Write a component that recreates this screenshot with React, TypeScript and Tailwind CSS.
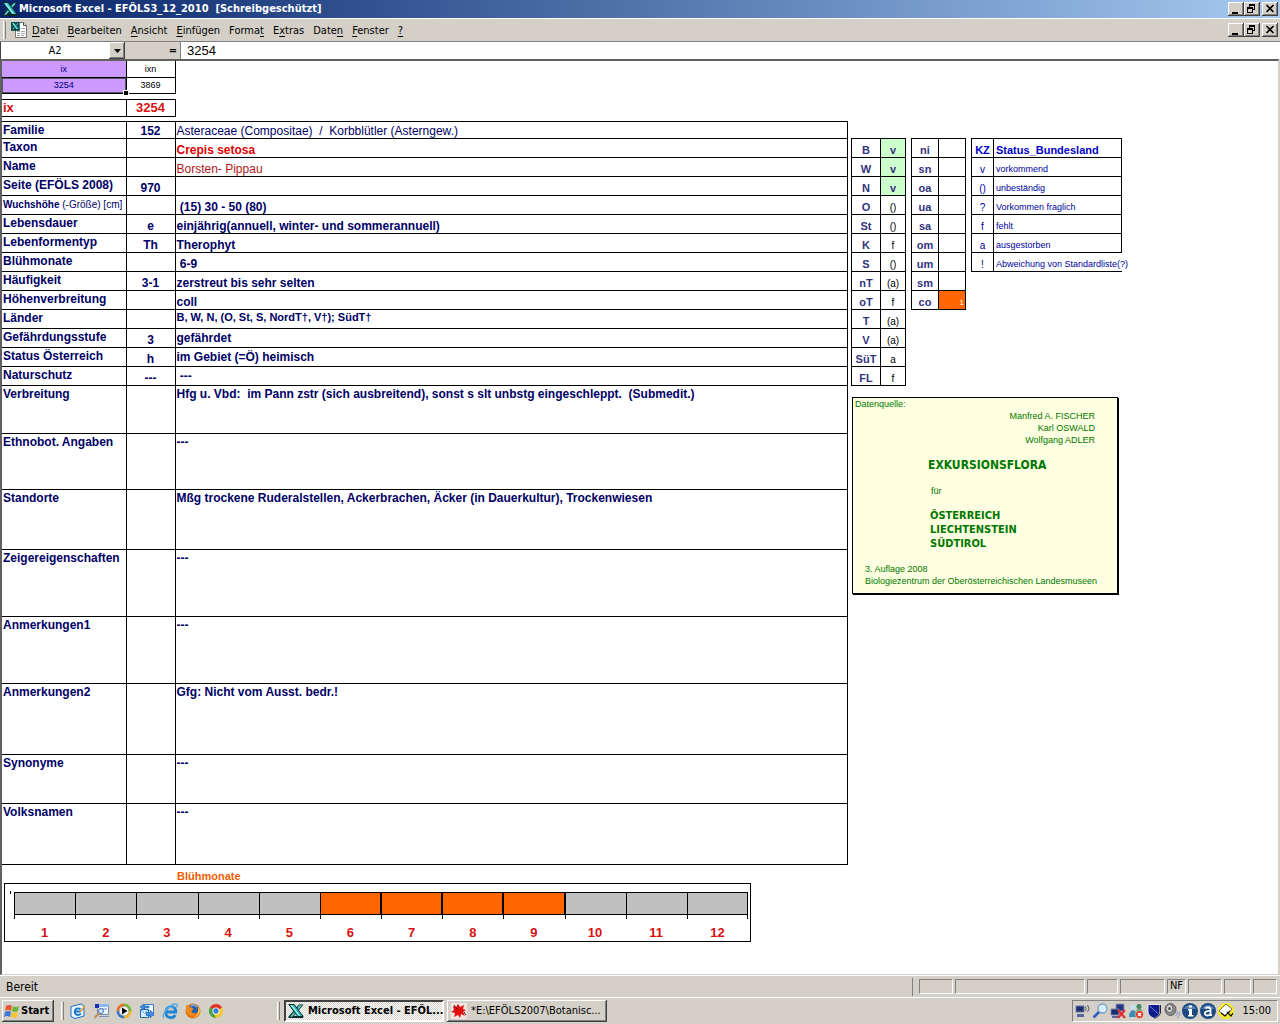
import React from "react";

const UI_FONT = "font-['DejaVu_Sans_Condensed','DejaVu_Sans',sans-serif]";
const RAISED =
  "bg-[#d4d0c8] shadow-[inset_-1px_-1px_#404040,inset_1px_1px_#ffffff,inset_-2px_-2px_#808080]";
const SUNKEN = "border border-t-[#808080] border-l-[#808080] border-b-white border-r-white";

type Row = {
  label: React.ReactNode;
  code?: string;
  value: string;
  height: string;
  valueClass?: string;
};

const rows: Row[] = [
  { label: "Familie", code: "152", value: "Asteraceae (Compositae)  /  Korbblütler (Asterngew.)", height: "h-[17px]", valueClass: "align-bottom font-normal" },
  { label: "Taxon", value: "Crepis setosa", height: "h-[19px]", valueClass: "align-bottom text-[#e00000]" },
  { label: "Name", value: "Borsten- Pippau", height: "h-[19px]", valueClass: "align-bottom font-normal text-[#b01818]" },
  { label: "Seite (EFÖLS 2008)", code: "970", value: "", height: "h-[19px]" },
  {
    label: (
      <span className="text-[10px]">
        Wuchshöhe <span className="font-normal">(-Größe) [cm]</span>
      </span>
    ),
    value: " (15) 30 - 50 (80)",
    height: "h-[19px]",
    valueClass: "align-bottom",
  },
  { label: "Lebensdauer", code: "e", value: "einjährig(annuell, winter- und sommerannuell)", height: "h-[19px]", valueClass: "align-bottom" },
  { label: "Lebenformentyp", code: "Th", value: "Therophyt", height: "h-[19px]", valueClass: "align-bottom" },
  { label: "Blühmonate", value: " 6-9", height: "h-[19px]", valueClass: "align-bottom" },
  { label: "Häufigkeit", code: "3-1", value: "zerstreut bis sehr selten", height: "h-[19px]", valueClass: "align-bottom" },
  { label: "Höhenverbreitung", value: "coll", height: "h-[19px]", valueClass: "align-bottom" },
  { label: "Länder", value: "B, W, N, (O, St, S, NordT†, V†); SüdT†", height: "h-[19px]", valueClass: "align-top text-[11px]" },
  { label: "Gefährdungsstufe", code: "3", value: "gefährdet", height: "h-[19px]", valueClass: "align-middle" },
  { label: "Status Österreich", code: "h", value: "im Gebiet (=Ö) heimisch", height: "h-[19px]", valueClass: "align-middle" },
  { label: "Naturschutz", code: "---", value: " ---", height: "h-[19px]", valueClass: "align-middle" },
  { label: "Verbreitung", value: "Hfg u. Vbd:  im Pann zstr (sich ausbreitend), sonst s slt unbstg eingeschleppt.  (Submedit.)", height: "h-[48px]" },
  { label: "Ethnobot. Angaben", value: "---", height: "h-[56px]" },
  { label: "Standorte", value: "Mßg trockene Ruderalstellen, Ackerbrachen, Äcker (in Dauerkultur), Trockenwiesen", height: "h-[60px]" },
  { label: "Zeigereigenschaften", value: "---", height: "h-[67px]" },
  { label: "Anmerkungen1", value: "---", height: "h-[67px]" },
  { label: "Anmerkungen2", value: "Gfg: Nicht vom Ausst. bedr.!", height: "h-[71px]" },
  { label: "Synonyme", value: "---", height: "h-[49px]" },
  { label: "Volksnamen", value: "---", height: "h-[61px]" },
];

const regions = [
  ["B", "v"], ["W", "v"], ["N", "v"], ["O", "()"], ["St", "()"], ["K", "f"], ["S", "()"],
  ["nT", "(a)"], ["oT", "f"], ["T", "(a)"], ["V", "(a)"], ["SüT", "a"], ["FL", "f"],
];

const zones = ["ni", "sn", "oa", "ua", "sa", "om", "um", "sm", "co"];

const legend = [
  ["v", "vorkommend"],
  ["()", "unbeständig"],
  ["?", "Vorkommen fraglich"],
  ["f", "fehlt"],
  ["a", "ausgestorben"],
  ["!", "Abweichung von Standardliste(?)"],
];

const menus = [
  ["", "D", "atei"],
  ["", "B", "earbeiten"],
  ["", "A", "nsicht"],
  ["", "E", "infügen"],
  ["Forma", "t", ""],
  ["E", "x", "tras"],
  ["Date", "n", ""],
  ["", "F", "enster"],
  ["", "?", ""],
];

const months = [1, 2, 3, 4, 5, 6, 7, 8, 9, 10, 11, 12];

const Svg: React.FC<{ children: React.ReactNode }> = ({ children }) => (
  <svg viewBox="0 0 16 16" className="size-4 shrink-0" aria-hidden="true">
    {children}
  </svg>
);

const ExcelX = () => (
  <g>
    <path d="M11 1.500h4.500L6 13h9v2H.5v-1.500z" fill="#062a2a" />
    <path d="M11.500 2.300H14L4.200 13.800H2z" fill="#5fd6cf" />
    <path d="M.8 1.500h5.400l9 12h-5.400z" fill="#29b8b8" stroke="#062a2a" strokeWidth="1" />
    <path d="M2.600 2.300h1.800l7.800 10.400h-1.600z" fill="#a4f2ea" />
  </g>
);

const ExcelIcon = () => (
  <Svg>
    <ExcelX />
  </Svg>
);

const SheetIcon = () => (
  <Svg>
    <path d="M4.500.5h8l3 3v12h-11z" fill="#fff" stroke="#777" />
    <path d="M12.500.5v3h3" fill="#ddd" stroke="#555" />
    <path d="M10 6.500h4M6 9.500h3M10 9.500h4M6 11.500h3M10 11.500h4M6 13.500h3M10 13.500h3" stroke="#a8a8a8" />
    <g transform="translate(0 0) scale(.55)">
      <path d="M0 0h16v16H0z" fill="#0d5555" />
      <ExcelX />
    </g>
  </Svg>
);

const WindowButtons = () => (
  <div className="flex items-center">
    <button aria-label="Minimieren" className={`h-[14px] w-4 ${RAISED}`}>
      <svg viewBox="0 0 16 14" className="h-[14px] w-4">
        <path d="M4 10h6v2H4z" />
      </svg>
    </button>
    <button aria-label="Wiederherstellen" className={`h-[14px] w-4 ${RAISED}`}>
      <svg viewBox="0 0 16 14" className="h-[14px] w-4">
        <path d="M5 2h6v6H9V7h1V4H6v1H5zM3 5h6v6H3zm1 2v3h4V7z" fillRule="evenodd" />
      </svg>
    </button>
    <button aria-label="Schließen" className={`ml-0.5 h-[14px] w-4 ${RAISED}`}>
      <svg viewBox="0 0 16 14" className="h-[14px] w-4">
        <path d="M4.500 3l7 7M11.500 3l-7 7" stroke="#000" strokeWidth="1.600" />
      </svg>
    </button>
  </div>
);

const Grip = () => <span className="h-[18px] w-[3px] border-l border-r border-l-white border-r-[#808080]" />;

const DataTable = () => (
  <table className="w-full table-fixed border-collapse text-[12px] leading-4 font-bold text-[#000066]">
    <colgroup>
      <col className="w-[124px]" />
      <col className="w-[49px]" />
      <col />
    </colgroup>
    <tbody>
      {rows.map((row, i) => (
        <tr key={i} className={row.height}>
          <th scope="row" className="border-y border-r border-black p-0 pl-px text-left align-top whitespace-nowrap">
            {row.label}
          </th>
          <td className="border border-black p-0 text-center align-bottom leading-[14px]">{row.code}</td>
          <td className={`border border-black p-0 pl-px whitespace-pre ${row.valueClass ?? "align-top"}`}>
            <div className={row.height === "h-[19px]" || row.height === "h-[17px]" ? "leading-[14px]" : "leading-4"}>{row.value}</div>
          </td>
        </tr>
      ))}
    </tbody>
  </table>
);

const BloomChart = () => (
  <section className="mr-[97px] ml-0.5">
    <h2 className="mt-1 pl-[173px] text-[11px] leading-[14px] font-bold text-[#f06000]">Blühmonate</h2>
    <div className="relative border border-black pt-2 pr-0.5 pl-[9px]">
      <span className="absolute top-[7px] left-[5px] h-[3px] w-px bg-black" />
      <ol className="grid grid-cols-12">
        {months.map((m) => (
          <li key={m} className="text-center text-[13px] leading-4 font-bold text-[#d81010]">
            <div
              className={`h-[23px] border-y border-l border-black ${
                m >= 6 && m <= 9 ? "border-r bg-[#ff6600]" : "bg-[#c0c0c0]"
              } ${m === 12 ? "border-r" : ""}`}
            />
            <div className={`h-1 border-l border-black ${m === 12 ? "border-r" : ""}`} />
            <div className="pt-1.5">{m}</div>
          </li>
        ))}
      </ol>
    </div>
  </section>
);

const SideTables = () => (
  <div className="flex items-start gap-[5px] text-[11px] leading-[13px]">
    <table className="w-[55px] table-fixed border-collapse">
      <tbody>
        {regions.map(([name, state], i) => (
          <tr key={name} className="h-[19px]">
            <th scope="row" className="w-[29px] border border-black p-0 align-bottom text-[#333380]">{name}</th>
            <td
              className={`border border-black p-0 text-center align-bottom ${
                i < 3 ? "bg-[#ccffcc] font-bold text-[#333380]" : "text-[10px]"
              }`}
            >
              {state}
            </td>
          </tr>
        ))}
      </tbody>
    </table>
    <table className="w-[55px] table-fixed border-collapse">
      <tbody>
        {zones.map((zone) => (
          <tr key={zone} className="h-[19px]">
            <th scope="row" className="w-[27px] border border-black p-0 align-bottom text-[#333380]">{zone}</th>
            <td className={`border border-black p-0 pr-px text-right align-bottom text-[8px] text-white ${zone === "co" ? "bg-[#ff6600]" : ""}`}>
              {zone === "co" && "1"}
            </td>
          </tr>
        ))}
      </tbody>
    </table>
    <table className="w-[151px] table-fixed border-collapse text-[#0000a0]">
      <thead>
        <tr className="h-[19px] text-[#0000c8]">
          <th className="w-[22px] border border-black p-0 align-bottom">KZ</th>
          <th className="border border-black p-0 pl-0.5 text-left align-bottom">Status_Bundesland</th>
        </tr>
      </thead>
      <tbody>
        {legend.map(([key, text]) => (
          <tr key={key} className="h-[19px]">
            <td className="border border-black p-0 text-center align-bottom text-[10px]">{key}</td>
            <td
              className={`border-y border-l border-black p-0 pl-0.5 align-bottom text-[9px] whitespace-nowrap ${
                key === "!" ? "" : "border-r"
              }`}
            >
              {text}
            </td>
          </tr>
        ))}
      </tbody>
    </table>
  </div>
);

const SourceNote = () => (
  <aside className="mt-[11px] ml-px w-[266px] border border-black bg-[#ffffe1] px-0.5 pb-1.5 text-[9px] leading-3 text-[#007800] shadow-[1px_1px_#000]">
    <p>Datenquelle:</p>
    <p className="pr-5 text-right">
      Manfred A. FISCHER
      <br />
      Karl OSWALD
      <br />
      Wolfgang ADLER
    </p>
    <h2 className="mt-[11px] pl-[73px] font-['DejaVu_Sans_Condensed',sans-serif] text-[12px] leading-4 font-bold">EXKURSIONSFLORA</h2>
    <p className="mt-3 pl-[76px]">für</p>
    <p className="mt-3 pl-[75px] font-['DejaVu_Sans_Condensed',sans-serif] text-[11px] leading-[14px] font-bold">
      ÖSTERREICH
      <br />
      LIECHTENSTEIN
      <br />
      SÜDTIROL
    </p>
    <p className="mt-3 pl-2.5">
      3. Auflage 2008
      <br />
      Biologiezentrum der Oberösterreichischen Landesmuseen
    </p>
  </aside>
);

const quickLaunch = [
  {
    name: "Outlook Express",
    art: (
      <>
        <path d="M1 3.500L11 1l3 2v10l-9 2.500-4-2z" fill="#eaf6ff" stroke="#1f6fc0" />
        <path d="M10.500 6.500a3.300 3.300 0 1 0 .3 4M5 8.500h5.500" fill="none" stroke="#1475d0" strokeWidth="1.800" />
        <path d="M10 9l5-6" stroke="#e39a28" strokeWidth="1.500" />
      </>
    ),
  },
  {
    name: "Suche",
    art: (
      <>
        <path d="M4.500 1.500h11v10h-11z" fill="#e9f4fd" stroke="#6d8fb4" />
        <path d="M4 1h12v3H4z" fill="#8fb8ea" />
        <path d="M2 1h4v4H2z" fill="#1a2fb8" />
        <path d="M9 6h5M6 13.500h10" stroke="#7d95b5" />
        <circle cx="8" cy="8" r="2.500" fill="#cfe6f8" stroke="#4d6fa5" />
        <path d="M6 10l-4.500 5" stroke="#c98b50" strokeWidth="2" />
      </>
    ),
  },
  {
    name: "Media Player",
    art: (
      <>
        <path d="M8 8V.5A7.500 7.500 0 0 0 .5 8z" fill="#f06a1c" />
        <path d="M8 8V.5A7.500 7.500 0 0 1 15.500 8z" fill="#6cb82c" />
        <path d="M8 8H.5A7.500 7.500 0 0 0 8 15.500z" fill="#3974c8" />
        <path d="M8 8h7.500A7.500 7.500 0 0 1 8 15.500z" fill="#f4b51e" />
        <circle cx="8" cy="8" r="4.800" fill="#f8f8f8" stroke="#aaa" />
        <path d="M6 4.500L11.500 8 6 11.500z" />
      </>
    ),
  },
  {
    name: "Synchronisieren",
    art: (
      <>
        <path d="M5.500 1.500h9v11h-9z" fill="#f4faff" stroke="#2e7bd0" />
        <path d="M1.500 6.500h8v8h-8z" fill="#d8edfc" stroke="#1d69bd" />
        <path d="M1.500 6.500l4 4 4-4" fill="none" stroke="#66a7e8" />
        <path d="M1 4l4-3v2h5v2H5v2zM15 11l-4 4v-2.500H7v-3h4V7z" fill="#3b8fe4" stroke="#1556a6" strokeWidth=".5" />
      </>
    ),
  },
  {
    name: "Internet Explorer",
    art: (
      <>
        <path d="M4.500 9h9.300c.4-7-9.600-7.500-10 .3C3.500 15 11 16.500 13.300 12" fill="none" stroke="#1d86d8" strokeWidth="2.800" />
        <path d="M4.300 7.500C5 4.500 9 3 11.500 5" fill="none" stroke="#7cc8f6" strokeWidth="1" />
        <path d="M2 15C-1.500 12 8.500-.5 14.500 1.200c1.300.6 1 2 .2 3.300" fill="none" stroke="#5aa9e4" strokeWidth="1.400" />
      </>
    ),
  },
  {
    name: "Firefox",
    art: (
      <>
        <circle cx="8" cy="8" r="7.500" fill="#e8700f" />
        <circle cx="8.500" cy="6.500" r="5" fill="#2b5fae" />
        <path d="M6 3c2-1.500 4.500-1 6 1" fill="none" stroke="#79b5e8" strokeWidth="1.500" />
        <path d="M1.500 1.500L4 4l3 .5L8.500 6 6.500 8c.5 2.500 3 3 5.500 1.500-1 3-5 4.500-8 2.500C1 10 .5 5 1.500 1.500z" fill="#f08a1c" />
        <path d="M13 3.500c4 4 1 10.500-5 11.500 4-2.500 6-6 5-11.500z" fill="#ffc53a" />
      </>
    ),
  },
  {
    name: "Chrome",
    art: (
      <>
        <circle cx="8" cy="8" r="7" fill="#f6c82a" />
        <path d="M8 8L1.900 4.500a7 7 0 0 1 12.200 0z" fill="#dc3528" />
        <path d="M8 8L1.900 4.500A7 7 0 0 0 8 15z" fill="#44a544" />
        <path d="M8 8h4.500L8 15l-2-4z" fill="#f6c82a" />
        <circle cx="8" cy="8" r="3.600" fill="#fff" />
        <circle cx="8" cy="8" r="2.700" fill="#3b7de0" />
      </>
    ),
  },
];

const trayIcons = [
  <>
    <path d="M2 3h8v6H2z" fill="#1d2f6e" stroke="#6474a8" />
    <path d="M3 11h7v3H3z" fill="#56679a" />
    <path d="M11.500 3.500q1.500 2 0 4M13.500 2q3 3.500 0 7" fill="none" stroke="#555" />
  </>,
  <>
    <circle cx="10.500" cy="5.500" r="4.500" fill="#d5efff" stroke="#7a9cc4" strokeWidth="1.300" />
    <path d="M7 9l-5.500 5.500" stroke="#2c5fc0" strokeWidth="2.600" />
  </>,
  <>
    <path d="M6 1h8v7H6z" fill="#25377c" stroke="#8290bd" />
    <path d="M1 6h8v6H1z" fill="#1b2c70" stroke="#7785b2" />
    <path d="M2 14h7" stroke="#56679a" strokeWidth="2" />
    <path d="M8 7l7 8M15 7l-7 8" stroke="#e03030" strokeWidth="2.200" />
  </>,
  <>
    <circle cx="5" cy="4" r="2.500" fill="#bfe3ef" />
    <path d="M1 14c0-9 8-9 8 0z" fill="#3a8fb4" />
    <circle cx="11" cy="3.500" r="2.500" fill="#3c8a5a" />
    <path d="M7 11c1-7 8-7 8 0z" fill="#54a46c" />
    <circle cx="11.500" cy="11.500" r="4" fill="#d8331c" stroke="#fff" strokeWidth=".5" />
    <path d="M10 10l3 3M13 10l-3 3" stroke="#fff" strokeWidth="1.400" />
  </>,
  <>
    <path d="M2 1.500h12V9c0 3-3 5-6 6.500C5 14 2 12 2 9z" fill="#101c8c" stroke="#e8e8f0" />
    <path d="M3.500 3l9 8" stroke="#6f7fdc" />
    <path d="M14.500 2v7c0 3-3 5-6 6.500" fill="none" stroke="#222" />
  </>,
  <>
    <ellipse cx="6.500" cy="6.500" rx="5.500" ry="6" fill="#8c8c8c" stroke="#5e5e5e" />
    <ellipse cx="5.500" cy="5.500" rx="3.500" ry="4" fill="#d5d5d5" stroke="#666" />
    <circle cx="5.500" cy="5.500" r="1.500" fill="#555" />
    <path d="M11.500 13q2.500-2 2-5M13.500 15q2.500-2.500 1.800-6" fill="none" stroke="#8f8fc4" />
  </>,
  <>
    <circle cx="8" cy="8" r="8" fill="#1c4a80" />
    <path d="M2 6a6.500 6.500 0 0 1 12 0" fill="#5582b4" />
    <path d="M7 2.500h3v2H7zM6 6h4v6h1.500v1.500H6V12h1V7.500H6z" fill="#fff" />
  </>,
  <>
    <circle cx="8" cy="8" r="8" fill="#1c4a80" />
    <path d="M2 6a6.500 6.500 0 0 1 12 0" fill="#5582b4" />
    <path d="M5.500 5.500c1-1.500 5-1.500 5 1V12h1.500M10.500 8c-7-.5-7 4.500-3 4.500 1.500 0 3-1 3-2" fill="none" stroke="#fff" strokeWidth="1.800" />
  </>,
  <>
    <path d="M5 0h6l5 5v6l-5 5H5l-5-5V5z" fill="#f2ea2c" />
    <path d="M8 1l6 5-7 7-6-5z" fill="#fff" stroke="#555" strokeWidth=".8" />
    <path d="M3 10l4 3 5-5M9 9l4 4 2-3" fill="none" stroke="#111" strokeWidth="1.200" />
  </>,
];

const statusCells = ["w-[34px]", "w-[130px]", "w-[31px]", "w-[45px]", "w-[19px]", "w-[34px]", "w-[27px]", "w-[24px]"];

export default function App() {
  return (
    <div className="flex min-h-screen flex-col bg-[#d4d0c8] font-['Liberation_Sans',Arial,sans-serif] text-black">
      <header className={`${UI_FONT} text-[11px]`}>
        <div className="flex h-[18px] items-center bg-linear-to-r from-[#0a246a] to-[#a6caf0] pr-0.5 pl-0.5">
          <ExcelIcon />
          <h1 className="ml-px flex-1 font-bold whitespace-pre text-white">Microsoft Excel - EFÖLS3_12_2010  [Schreibgeschützt]</h1>
          <WindowButtons />
        </div>
        <nav className="flex h-[23px] items-center border-t border-white pr-0.5 pl-[3px]">
          <Grip />
          <span className="ml-[5px]">
            <SheetIcon />
          </span>
          <div className="ml-[5px] flex flex-1 gap-[9px] pt-0.5">
            {menus.map(([before, key, after]) => (
              <button key={before + key + after}>
                {before}
                <span className="underline underline-offset-2">{key}</span>
                {after}
              </button>
            ))}
          </div>
          <WindowButtons />
        </nav>
        <div className="flex h-[18px] border-t border-[#808080] bg-white">
          <input
            aria-label="Namenfeld"
            defaultValue="A2"
            className="w-[109px] border-l border-[#404040] bg-white pt-0.5 text-center outline-none"
          />
          <button aria-label="Namenfeld öffnen" className={`flex w-4 items-center justify-center ${RAISED}`}>
            <svg viewBox="0 0 7 4" className="h-1 w-[7px]">
              <path d="M0 0h7L3.500 4z" />
            </svg>
          </button>
          <label htmlFor="formula" className="w-14 border-r border-[#808080] bg-[#d4d0c8] pr-[3px] text-right leading-[17px] font-bold">
            =
          </label>
          <input
            id="formula"
            defaultValue="3254"
            className="min-w-0 flex-1 bg-white pl-1.5 font-['Liberation_Sans',sans-serif] text-[13px] outline-none"
          />
        </div>
      </header>

      <main className="mr-px flex-1 border-t-2 border-r border-b border-l-2 border-t-[#606060] border-r-[#d4d0c8] border-b-[#d4d0c8] border-l-[#606060] bg-white">
        <table className="table-fixed border-collapse text-center text-[9px] leading-[14px]">
          <tbody>
            <tr className="h-4">
              <td className="w-[124px] border-r border-b border-black bg-[#cc99ff] p-0 text-[#000080]">ix</td>
              <td className="w-[49px] border-r border-b border-black p-0">ixn</td>
            </tr>
            <tr className="h-4">
              <td className="relative border-r border-b border-black bg-[#cc99ff] p-0 text-[#000080] shadow-[inset_0_0_0_1px_#555566]">
                3254
                <span className="absolute -right-0.5 -bottom-0.5 size-1 bg-black outline outline-white" />
              </td>
              <td className="border-r border-b border-black p-0">3869</td>
            </tr>
          </tbody>
        </table>
        <table className="mt-[5px] mb-1 table-fixed border-collapse text-[13px] leading-4 font-bold text-[#d81010]">
          <tbody>
            <tr className="h-[17px]">
              <th scope="row" className="w-[124px] border-y border-r border-black p-0 pl-px text-left">ix</th>
              <td className="w-[49px] border border-black p-0 text-center">3254</td>
            </tr>
          </tbody>
        </table>
        <div className="grid grid-cols-[minmax(0,846fr)_minmax(0,430fr)]">
          <div>
            <DataTable />
            <BloomChart />
          </div>
          <div className="pt-[17px] pl-[3px]">
            <SideTables />
            <SourceNote />
          </div>
        </div>
      </main>

      <footer className={`${UI_FONT} text-[11px]`}>
        <div className="flex h-[22px] items-center border-t border-white pr-[3px] pl-1.5">
          <span className="flex-1 text-[12px]">Bereit</span>
          <span className="mr-1.5 h-[18px] w-px bg-[#808080]" />
          <div className="flex gap-0.5">
            {statusCells.map((width, i) => (
              <span key={i} className={`flex h-[15px] items-center justify-center ${width} ${SUNKEN}`}>
                {i === 4 && "NF"}
              </span>
            ))}
          </div>
        </div>
        <div className="flex h-[27px] items-center border-t border-white pr-0.5 pl-0.5">
          <button className={`flex h-[22px] w-[52px] items-center gap-px pl-0.5 font-bold ${RAISED}`}>
            <Svg>
              <path d="M2 3q3-2 6 0L7 8Q4 6 1 8z" fill="#e8582c" />
              <path d="M9 3q3 2 6 0l-1 5q-3 2-6 0z" fill="#6fb43a" />
              <path d="M1 9q3-2 6 0l-1 5q-3-2-6 0z" fill="#3c78d8" />
              <path d="M8 9q3 2 6 0l-1 5q-3 2-6 0z" fill="#f4c22e" />
            </Svg>
            Start
          </button>
          <span className="ml-[7px] flex">
            <Grip />
          </span>
          <div className="ml-1.5 flex gap-[7px]">
            {quickLaunch.map((item) => (
              <button key={item.name} aria-label={item.name}>
                <Svg>{item.art}</Svg>
              </button>
            ))}
          </div>
          <span className="ml-[53px] flex">
            <Grip />
          </span>
          <button className="ml-1 flex h-[22px] w-40 items-center gap-1 border-2 border-t-[#404040] border-r-white border-b-white border-l-[#404040] bg-[repeating-conic-gradient(#ffffff_0_25%,#d4d0c8_0_50%)] bg-[length:2px_2px] pl-0.5 font-bold whitespace-nowrap">
            <ExcelIcon />
            Microsoft Excel - EFÖL...
          </button>
          <button className={`ml-[3px] flex h-[22px] w-40 items-center gap-1 pl-1 whitespace-nowrap ${RAISED}`}>
            <Svg>
              <path d="M0 0h16v16H0z" fill="#f0e4e0" />
              <path d="M7 1l2 3 4-2-1 4 3 1-3 2 2 4-4-2-1 4-2-3-4 2 1-4-4-1 3-2-1-4 3 1z" fill="#e01010" />
              <path d="M3 2l3 4M13 9l2 3" stroke="#501010" />
            </Svg>
            *E:\EFÖLS2007\Botanisc...
          </button>
          <div className={`ml-auto flex h-[22px] items-center gap-[2px] pr-1.5 pl-px ${SUNKEN}`}>
            {trayIcons.map((icon, i) => (
              <Svg key={i}>{icon}</Svg>
            ))}
            <time className="ml-1.5">15:00</time>
          </div>
        </div>
      </footer>
    </div>
  );
}
